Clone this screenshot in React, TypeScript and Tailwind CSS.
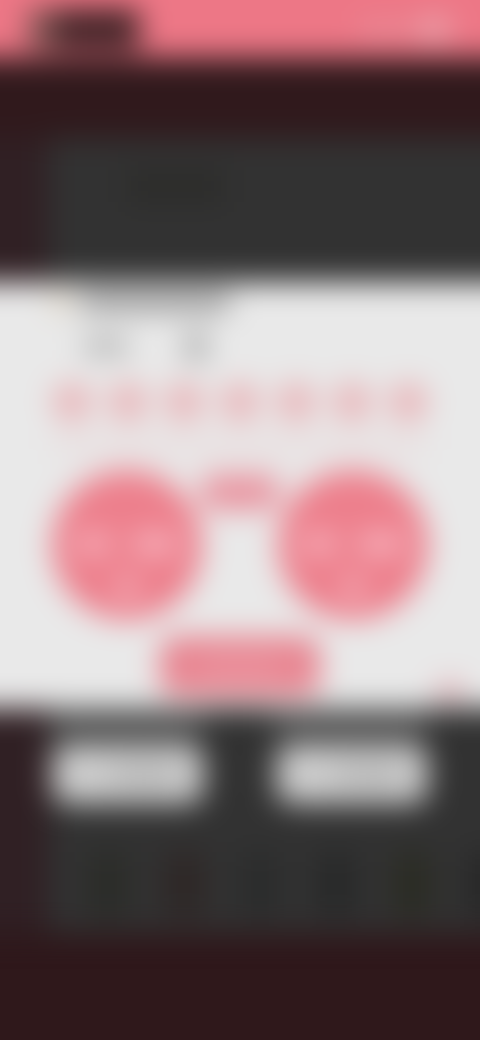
import clsx from 'clsx'

// Frosted view of the player. The layout underneath stays real
// (buttons, pads, rail) and the whole stage is blurred at once.
//
// The stage bleeds 48px past the window at the top and on both sides,
// otherwise the blur would fade its outer edges to the page colour.
const STEPS = [1, 2, 3, 4, 5, 6, 7]

const FOOT_TINTS = [
  'bg-[#2b2c28]',
  'bg-[#2e2726]',
  'bg-[#2b2c2c]',
  'bg-[#282929]',
  'bg-[#2b2c24]',
  'bg-[#272727]',
]

export default function App() {
  return (
    <main className="min-h-screen overflow-hidden bg-[#2f181b] font-['Roboto',sans-serif]">
      <div className="-mx-12 -mt-12 blur-[15px]">
        <StatusBar />

        <div className="h-20 bg-[#30191c]" />

        <RailRow className="h-[144px]">
          <div className="ml-20 mt-8 h-8 w-24 bg-[#2c2c2a]" />
        </RailRow>

        <Controls />

        <RailRow className="h-[225px]">
          <div className="flex h-7 justify-between pr-[100px]">
            <div className="h-full w-[155px] bg-[#545454]" />
            <div className="h-full w-[155px] bg-[#545454]" />
          </div>
          <div className="flex justify-between pl-1 pr-[100px] pt-2">
            <ActionButton label="Cancel" />
            <ActionButton label="Apply" />
          </div>
          <div className="flex gap-9 overflow-hidden pl-10 pt-12">
            {FOOT_TINTS.map(tint => (
              <div key={tint} className={clsx('h-16 w-10 shrink-0', tint)} />
            ))}
          </div>
        </RailRow>
      </div>
    </main>
  )
}

function StatusBar() {
  return (
    <header className="flex h-[106px] items-center justify-between bg-[#ed7786] px-[76px] pt-12">
      <div className="flex h-10 w-28 overflow-hidden rounded-lg bg-[#3f2326]">
        <div className="w-7 bg-[#785250]" />
      </div>
      <div className="flex items-center gap-2">
        <div className="h-3 w-12 bg-[#e6929c]" />
        <div className="h-6 w-9 rounded-full bg-[#e8a4ac]" />
      </div>
    </header>
  )
}

// Dark section with the narrow maroon rail on its left edge.
function RailRow({ className, children }: { className: string; children: React.ReactNode }) {
  return (
    <section className={clsx('flex', className)}>
      <div className="w-24 shrink-0 bg-[#302024]" />
      <div className="min-w-0 flex-1 bg-[#323232]">{children}</div>
    </section>
  )
}

function Controls() {
  return (
    <section className="bg-[#e9e9e9] px-[100px] pb-3 pt-3">
      <div className="flex h-4 items-center gap-3">
        <div className="h-4 w-4 rounded-full bg-[#d4bf9c]" />
        <div className="h-4 w-[150px] bg-[#8c8c8c]" />
      </div>
      <div className="mt-5 flex h-8 items-center gap-14 pl-8">
        <div className="h-4 w-11 bg-[#acacac]" />
        <div className="h-8 w-6 rounded-full bg-[#acacac]" />
      </div>

      <div className="mt-5 flex justify-between">
        {STEPS.map(step => (
          <button
            key={step}
            type="button"
            aria-label={`Step ${step}`}
            className="size-10 rounded-full bg-[#e9b6ba]"
          />
        ))}
      </div>
      <div className="mt-3 h-5 bg-[#e9dfe0]" />

      <div className="mt-4 flex items-start justify-between">
        <Pad label="Left pad" />
        <button
          type="button"
          aria-label="Mode"
          className="mt-1 h-9 w-[76px] rounded-lg bg-[#e9939f]"
        />
        <Pad label="Right pad" />
      </div>

      <div className="mt-4 flex h-[60px] justify-center">
        <button
          type="button"
          aria-label="Start"
          className="flex w-40 items-center justify-center rounded-2xl bg-[#e88591]"
        >
          <span className="h-3 w-20 bg-[#ee9aa5]" />
        </button>
      </div>
      <div className="-mr-9 -mt-3 ml-auto h-3 w-7 rounded-full bg-[#df909a]" />
    </section>
  )
}

function Pad({ label }: { label: string }) {
  return (
    <button
      type="button"
      aria-label={label}
      className="flex size-[150px] flex-col items-center rounded-full bg-[#ed7f8c]"
    >
      <span className="mt-16 flex gap-5">
        <span className="h-5 w-9 rounded-full bg-[#f8b8c2]" />
        <span className="h-5 w-12 rounded-full bg-[#f8b8c2]" />
      </span>
      <span className="mt-6 h-5 w-5 rounded-full bg-[#facad2]" />
    </button>
  )
}

function ActionButton({ label }: { label: string }) {
  return (
    <button
      type="button"
      aria-label={label}
      className="flex h-[60px] w-[152px] items-center justify-center rounded-2xl bg-[#cccccc]"
    >
      <span className="ml-8 h-4 w-16 bg-[#b0b0b0]" />
    </button>
  )
}
